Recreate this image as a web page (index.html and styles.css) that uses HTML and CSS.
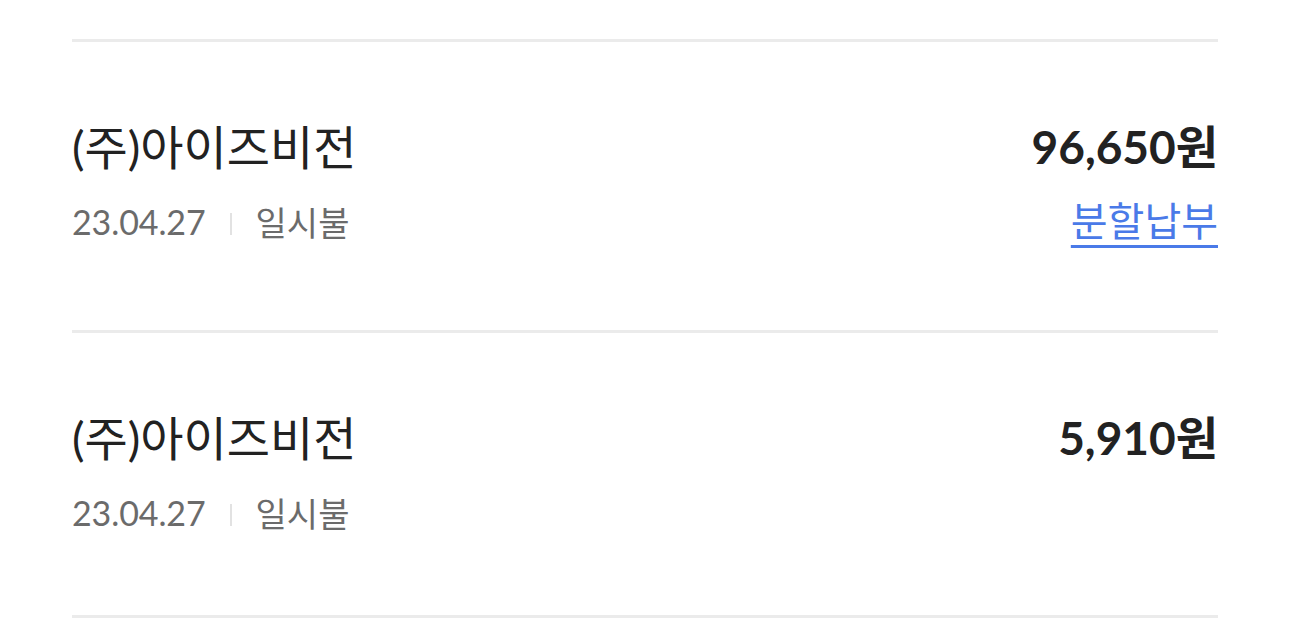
FILE: index.html
```html
<!DOCTYPE html>
<html lang="ko">
<head>
    <meta charset="UTF-8">
    <meta name="viewport" content="width=device-width, initial-scale=1.0">
    <title>결제 내역</title>
    <link rel="stylesheet" href="styles.css">
</head>
<body>
    <ul class="pay-list">
        <li class="pay-item">
            <div class="pay-info">
                <div class="pay-name">(주)아이즈비전</div>
                <div class="pay-meta">
                    <span class="pay-date">23.04.27</span>
                    <span class="divider"></span>
                    <span class="pay-type">일시불</span>
                </div>
            </div>
            <div class="pay-right">
                <div class="pay-amount">96,650원</div>
                <a href="#" class="pay-link">분할납부</a>
            </div>
        </li>
        <li class="pay-item">
            <div class="pay-info">
                <div class="pay-name">(주)아이즈비전</div>
                <div class="pay-meta">
                    <span class="pay-date">23.04.27</span>
                    <span class="divider"></span>
                    <span class="pay-type">일시불</span>
                </div>
            </div>
            <div class="pay-right">
                <div class="pay-amount">5,910원</div>
            </div>
        </li>
    </ul>
</body>
</html>
```

FILE: styles.css
```css
body {
    margin: 0;
    padding: 39px 72px 0;
    background: #fff;
    font-family: Lato, "Noto Sans CJK KR", sans-serif;
    color: #222;
}
.pay-list {
    list-style: none;
    margin: 0;
    padding: 0;
    border-top: 3px solid #ebebeb;
}
.pay-item {
    display: flex;
    justify-content: space-between;
    align-items: flex-start;
    padding: 75px 0 79px;
    border-bottom: 3px solid #ebebeb;
}
.pay-name {
    font-size: 47px;
    line-height: 60px;
    color: #222;
}
.pay-meta {
    display: flex;
    align-items: center;
    margin-top: 20px;
    height: 48px;
    font-size: 34px;
    color: #6b6b6b;
}
.pay-date {
    letter-spacing: -0.1px;
}
.divider {
    width: 2px;
    height: 22px;
    margin: 6px 24px 0;
    background: #e2e2e2;
}
.pay-right {
    display: flex;
    flex-direction: column;
    align-items: flex-end;
}
.pay-amount {
    font-size: 46px;
    line-height: 60px;
    font-weight: 700;
    color: #222;
}
.pay-link {
    margin-top: 14px;
    font-size: 40px;
    line-height: 60px;
    color: #4a7ae8;
    text-decoration: underline;
    text-decoration-thickness: 3px;
    text-underline-offset: 9px;
}
```
